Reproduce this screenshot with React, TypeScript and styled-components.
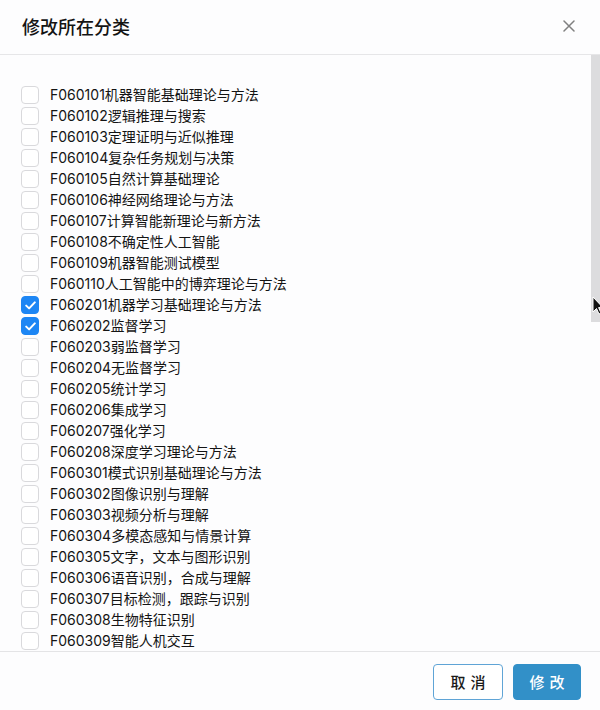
import React, { useState } from "react";
import styled, { createGlobalStyle } from "styled-components";

const GlobalStyle = createGlobalStyle`
  html, body { margin: 0; padding: 0; background: #fdfdfe; }
  #root { height: 710px; }
  * { box-sizing: border-box; }
`;

const FONT = `Inter, "Noto Sans CJK SC", "Noto Sans", sans-serif`;

const Modal = styled.div`
  position: relative;
  width: 600px;
  height: 710px;
  display: flex;
  flex-direction: column;
  background: #fdfdfe;
  font-family: ${FONT};
  color: #222;
`;

const Header = styled.div`
  height: 55px;
  flex: none;
  display: flex;
  align-items: center;
  justify-content: space-between;
  padding: 0 24px 2px 22px;
  border-bottom: 1px solid #e6e6e8;
`;

const Title = styled.h1`
  margin: 0;
  font-size: 18px;
  font-weight: 500;
  color: #141414;
  font-family: "Noto Sans CJK SC", sans-serif;
`;

const CloseButton = styled.button`
  border: none;
  background: none;
  padding: 0;
  width: 14px;
  height: 14px;
  display: flex;
  align-items: center;
  justify-content: center;
  cursor: pointer;
`;

const Body = styled.div`
  flex: 1;
  min-height: 0;
  overflow: hidden;
  padding: 31px 0 0 21px;
`;

const ScrollThumb = styled.div`
  position: absolute;
  right: 0;
  top: 55px;
  width: 9px;
  height: 267px;
  background: #dcdcde;
  pointer-events: none;
`;

const List = styled.div`
  display: flex;
  flex-direction: column;
`;

const Row = styled.label`
  height: 21px;
  display: flex;
  align-items: flex-start;
  gap: 11px;
  cursor: pointer;
`;

const Box = styled.span<{ $checked: boolean }>`
  width: 18px;
  height: 18px;
  flex: none;
  border-radius: 4px;
  border: 1px solid ${(p) => (p.$checked ? "#1d86f4" : "#d9d9dc")};
  background: ${(p) => (p.$checked ? "#1d86f4" : "#ffffff")};
  display: flex;
  align-items: center;
  justify-content: center;
`;

const Label = styled.span`
  font-size: 14px;
  line-height: 18px;
  color: #141414;
  white-space: nowrap;
`;

const Footer = styled.div`
  height: 59px;
  flex: none;
  border-top: 1px solid #e4e4e6;
  display: flex;
  align-items: center;
  justify-content: flex-end;
  gap: 10px;
  padding: 1px 19px 0 0;
`;

const Button = styled.button<{ $primary?: boolean }>`
  height: 36px;
  width: ${(p) => (p.$primary ? "68px" : "70px")};
  border-radius: 4px;
  font-family: "Noto Sans CJK SC", sans-serif;
  font-size: 15px;
  font-weight: 500;
  letter-spacing: 5px;
  padding: 0 0 0 5px;
  cursor: pointer;
  border: 1px solid ${(p) => (p.$primary ? "#3290c8" : "#5fa4d6")};
  background: ${(p) => (p.$primary ? "#3290c8" : "#ffffff")};
  color: ${(p) => (p.$primary ? "#ffffff" : "#1a1a1a")};
`;

const Pointer = styled.svg`
  position: absolute;
  left: 592px;
  top: 296px;
  pointer-events: none;
`;

const ITEMS = [
  "F060101机器智能基础理论与方法",
  "F060102逻辑推理与搜索",
  "F060103定理证明与近似推理",
  "F060104复杂任务规划与决策",
  "F060105自然计算基础理论",
  "F060106神经网络理论与方法",
  "F060107计算智能新理论与新方法",
  "F060108不确定性人工智能",
  "F060109机器智能测试模型",
  "F060110人工智能中的博弈理论与方法",
  "F060201机器学习基础理论与方法",
  "F060202监督学习",
  "F060203弱监督学习",
  "F060204无监督学习",
  "F060205统计学习",
  "F060206集成学习",
  "F060207强化学习",
  "F060208深度学习理论与方法",
  "F060301模式识别基础理论与方法",
  "F060302图像识别与理解",
  "F060303视频分析与理解",
  "F060304多模态感知与情景计算",
  "F060305文字，文本与图形识别",
  "F060306语音识别，合成与理解",
  "F060307目标检测，跟踪与识别",
  "F060308生物特征识别",
  "F060309智能人机交互",
];

const Check = () => (
  <svg width="11" height="9" viewBox="0 0 11 9" fill="none">
    <path d="M1.2 4.6 L4.1 7.4 L9.8 1.4" stroke="#fff" strokeWidth="2" strokeLinecap="round" strokeLinejoin="round" />
  </svg>
);

export default function App() {
  const [checked, setChecked] = useState<Set<string>>(
    () => new Set(["F060201机器学习基础理论与方法", "F060202监督学习"])
  );
  const toggle = (k: string) =>
    setChecked((prev) => {
      const n = new Set(prev);
      n.has(k) ? n.delete(k) : n.add(k);
      return n;
    });

  return (
    <>
      <GlobalStyle />
      <Modal>
        <Header>
          <Title>修改所在分类</Title>
          <CloseButton aria-label="close">
            <svg width="12" height="12" viewBox="0 0 12 12">
              <path d="M1 1 L11 11 M11 1 L1 11" stroke="#808080" strokeWidth="1.5" strokeLinecap="round" />
            </svg>
          </CloseButton>
        </Header>
        <Body>
          <List>
            {ITEMS.map((it) => {
              const on = checked.has(it);
              return (
                <Row key={it} onClick={() => toggle(it)}>
                  <Box $checked={on}>{on && <Check />}</Box>
                  <Label>{it}</Label>
                </Row>
              );
            })}
          </List>
        </Body>
        <Footer>
          <Button>取消</Button>
          <Button $primary>修改</Button>
        </Footer>
        <ScrollThumb />
        <Pointer width="12" height="20" viewBox="0 0 12 20">
          <path d="M1 1 L1 16 L4.5 12.5 L7 18 L9 17 L6.6 11.6 L11 11.6 Z" fill="#111" stroke="#fff" strokeWidth="1" />
        </Pointer>
      </Modal>
    </>
  );
}
